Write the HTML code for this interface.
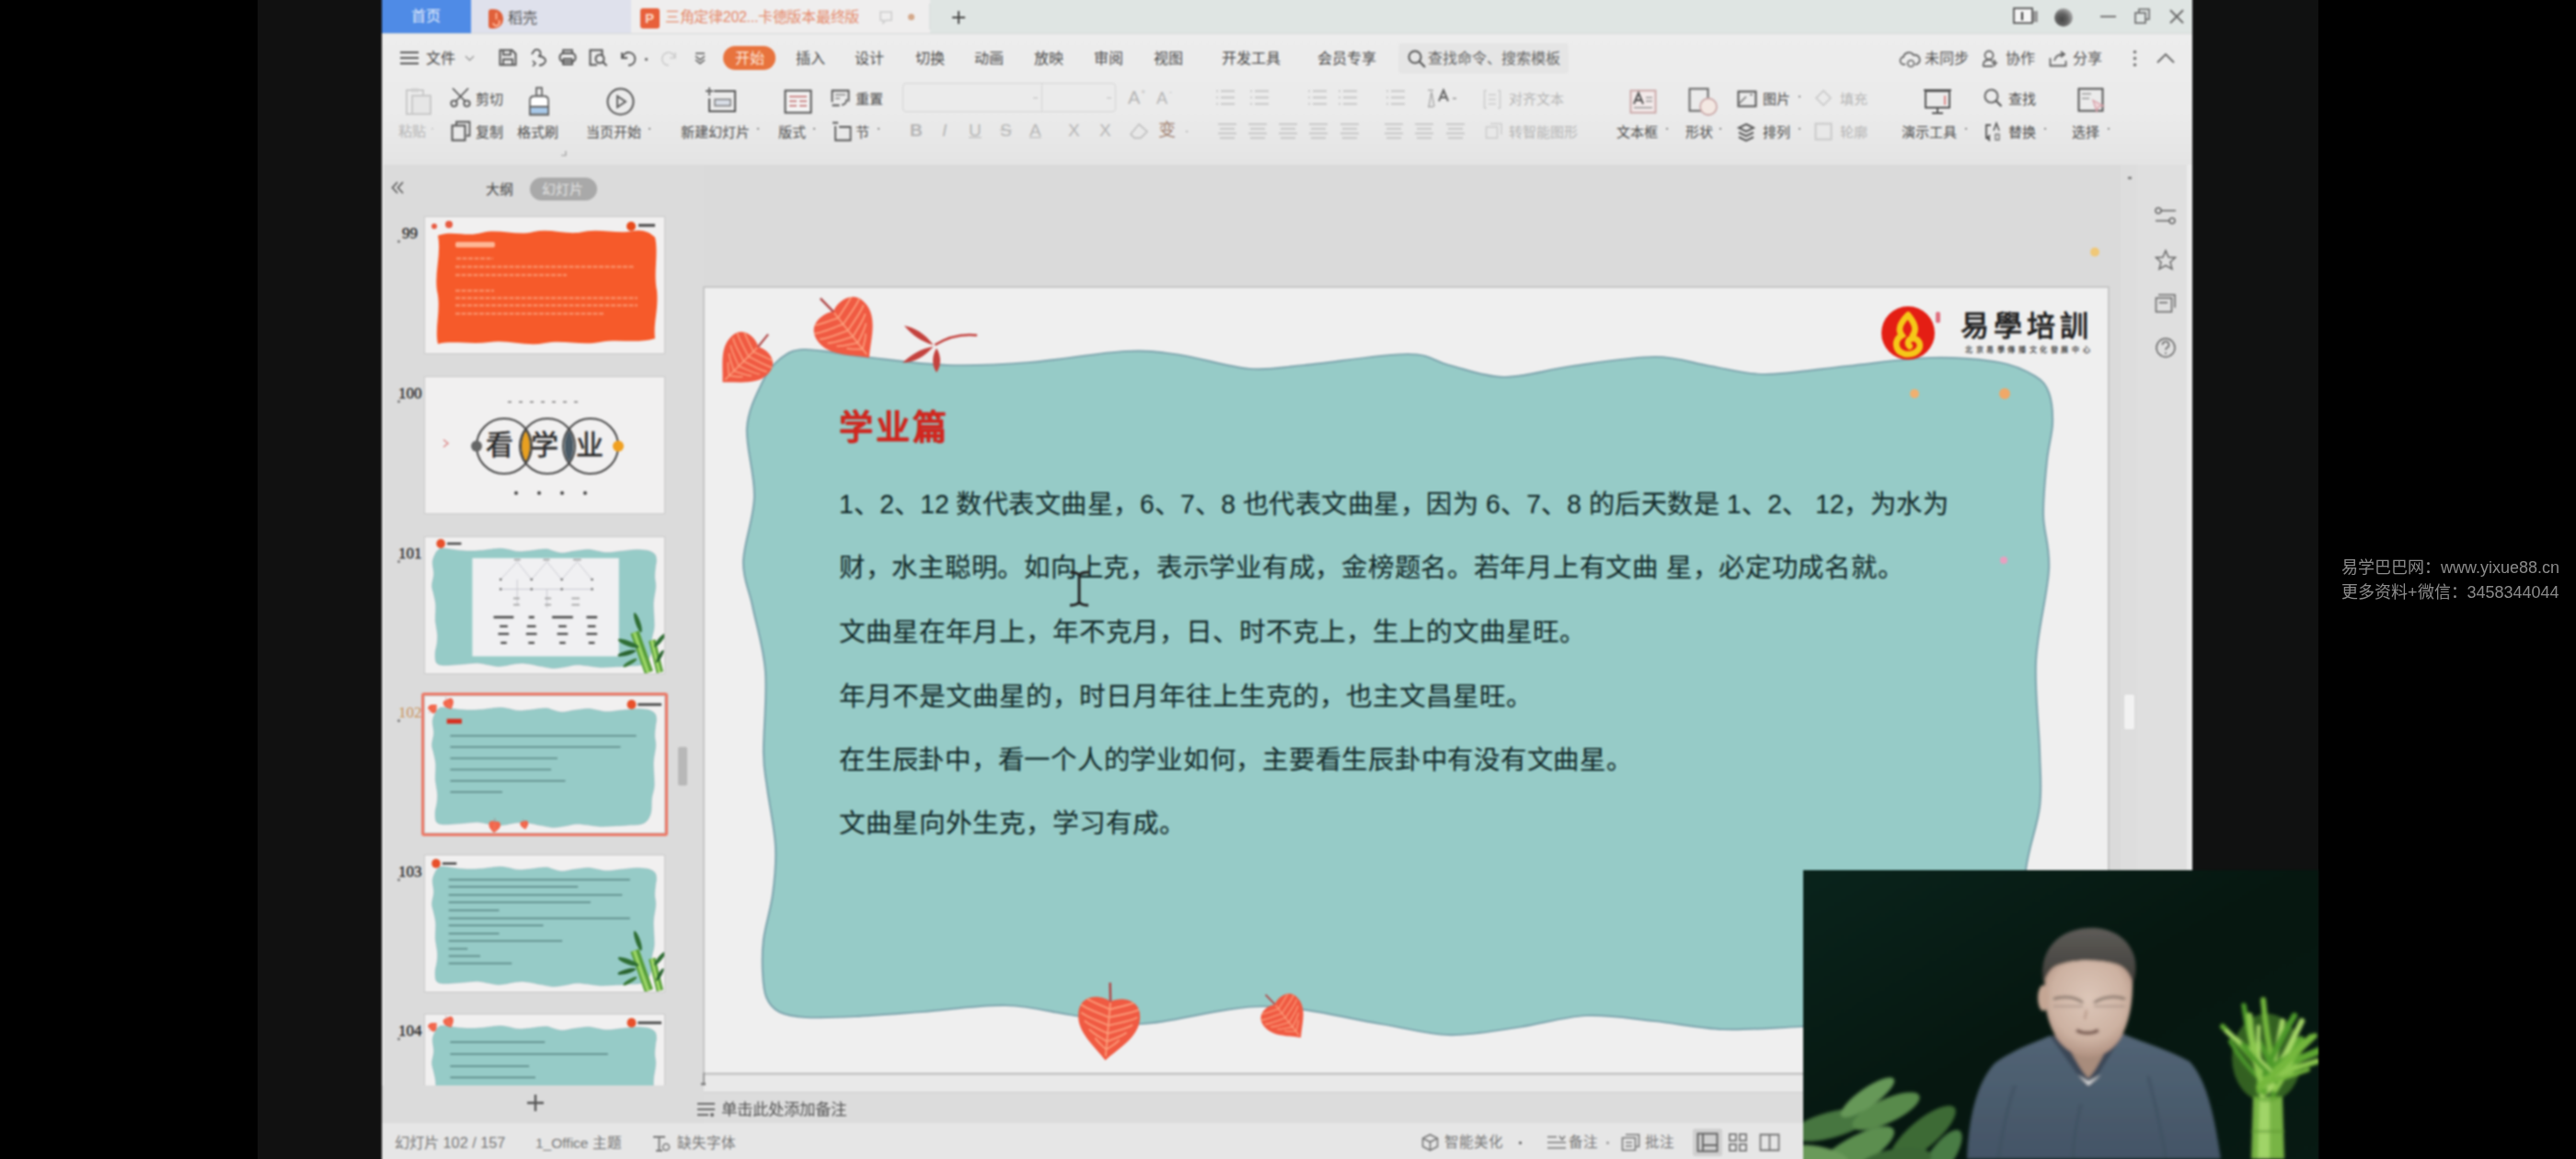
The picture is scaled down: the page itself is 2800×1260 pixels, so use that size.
<!DOCTYPE html>
<html lang="zh-CN"><head><meta charset="utf-8">
<style>
*{margin:0;padding:0;box-sizing:border-box}
html,body{width:2800px;height:1260px;overflow:hidden;background:#000;font-family:"Liberation Sans",sans-serif}
.a{position:absolute}
.t{position:absolute;white-space:nowrap;line-height:1}
.wm{left:2545px;color:#8a8a8a;font-size:18px}
.mi{top:56px;font-size:16px;color:#4a4a4a}
.rb{font-size:15px;color:#4a4a4a}
.lt{color:#b4b4b4}
.dd{font-size:10px;color:#777}
.sl{font-size:28.6px;color:#132a2a;-webkit-text-stroke:0.15px #132a2a;font-family:"Liberation Sans",sans-serif;transform-origin:0 0}
svg{position:absolute;overflow:visible}
</style></head><body>
<div class="a" style="left:280px;top:-6px;width:135px;height:1272px;background:#111"></div>
<div class="a" style="left:2383px;top:-6px;width:137px;height:1272px;background:#101111"></div>
<div id="root" style="position:absolute;left:0;top:0;width:2800px;height:1260px;filter:blur(1px)">
<!-- backgrounds -->

<!-- window -->
<div class="a" style="left:415px;top:-6px;width:1968px;height:43px;background:#dfe5e3"></div>
<div class="a" style="left:415px;top:-6px;width:97px;height:43px;background:#4f8be6"></div>
<div class="a" style="left:512px;top:-6px;width:174px;height:43px;background:#dfe1ec"></div>
<div class="a" style="left:686px;top:-6px;width:325px;height:43px;background:#efeeee"></div>
<div class="a" style="left:415px;top:36px;width:1968px;height:1px;background:#d6d9d9"></div>
<div class="a" style="left:415px;top:37px;width:1968px;height:142px;background:linear-gradient(#ededed,#ebebeb 60%,#e4e4e4)"></div>

<!-- tab bar content -->
<div class="t" style="left:447px;top:10px;font-size:16px;color:#e8f0fc">首页</div>
<div class="a" style="left:531px;top:10px;width:16px;height:21px;background:#e0603a;border-radius:3px 10px 10px 3px"></div>
<svg style="left:533px;top:13px" width="12" height="16"><path d="M7 1C5 4 8 5 6 8 M3 12a3.5 3.5 0 1 0 6-3" fill="none" stroke="#ffb090" stroke-width="2"/></svg>
<div class="t" style="left:552px;top:12px;font-size:16px;color:#555">稻壳</div>
<div class="a" style="left:696px;top:9px;width:21px;height:22px;background:#e8603a;border-radius:3px"></div>
<div class="t" style="left:701px;top:12px;font-size:15px;font-weight:bold;color:#fbd9c8">P</div>
<div class="t" style="left:723px;top:11px;font-size:16px;color:#e5896a;letter-spacing:-0.3px">三角定律202...卡德版本最终版</div>
<svg style="left:955px;top:11px" width="16" height="16"><path d="M2 2h12v9H8l-3 3v-3H2z" fill="none" stroke="#ccc" stroke-width="1.6"/></svg>
<div class="a" style="left:987px;top:15px;width:7px;height:7px;border-radius:50%;background:#d4a88a"></div>
<div class="a" style="left:1010px;top:4px;width:1px;height:28px;background:#d8dcdc"></div>
<svg style="left:1034px;top:11px" width="16" height="16"><path d="M8 1v14M1 8h14" stroke="#444" stroke-width="2"/></svg>
<!-- window controls -->
<svg style="left:2188px;top:8px" width="30" height="20"><rect x="1" y="1" width="20" height="16" fill="#f4f4f4" stroke="#555" stroke-width="1.8"/><rect x="22" y="4" width="5" height="12" fill="#999"/><path d="M10 5v9" stroke="#333" stroke-width="2"/></svg>
<div class="a" style="left:2233px;top:9px;width:20px;height:20px;border-radius:50%;background:radial-gradient(circle at 40% 60%,#444 0,#666 40%,#bbb 80%,transparent 81%)"></div>
<div class="a" style="left:2283px;top:17px;width:17px;height:2px;background:#777"></div>
<svg style="left:2320px;top:9px" width="18" height="18"><rect x="1" y="5" width="11" height="11" fill="none" stroke="#666" stroke-width="1.6"/><path d="M5 5V1h11v11h-4" fill="none" stroke="#666" stroke-width="1.6"/></svg>
<svg style="left:2358px;top:10px" width="16" height="16"><path d="M1 1l14 14M15 1L1 15" stroke="#666" stroke-width="1.8"/></svg>

<!-- menu row -->
<svg style="left:435px;top:55px" width="20" height="16"><path d="M0 2h20M0 8h20M0 14h20" stroke="#555" stroke-width="1.8"/></svg>
<div class="t mi" style="left:463px">文件</div>
<svg style="left:505px;top:60px" width="11" height="7"><path d="M1 1l4.5 4.5L10 1" fill="none" stroke="#999" stroke-width="1.4"/></svg>
<svg style="left:542px;top:53px" width="20" height="19"><path d="M1.5 1.5h13l4 4v12h-17z" fill="none" stroke="#555" stroke-width="2"/><path d="M5 1.5v5h8v-5M5 17.5v-6h10v6" fill="none" stroke="#555" stroke-width="1.8"/></svg>
<svg style="left:576px;top:53px" width="19" height="20"><path d="M4 3a4 4 0 1 1 6 5M4 3l-2 3M9 8c4 0 8 2 8 5s-4 5-7 5" fill="none" stroke="#555" stroke-width="1.8"/><path d="M3 13l3 3-3 3" fill="none" stroke="#555" stroke-width="1.6"/></svg>
<svg style="left:607px;top:53px" width="20" height="19"><rect x="1.5" y="5" width="17" height="9" rx="4" fill="none" stroke="#555" stroke-width="2"/><path d="M5 5V1.5h10V5M5 11v6h10v-6M5 11h10" fill="none" stroke="#555" stroke-width="1.8"/></svg>
<svg style="left:640px;top:53px" width="21" height="20"><path d="M9 17.5H1.5v-16h13v6" fill="none" stroke="#555" stroke-width="2"/><circle cx="12" cy="11" r="4.5" fill="none" stroke="#555" stroke-width="2"/><path d="M15 14l4.5 4.5" stroke="#555" stroke-width="2"/></svg>
<svg style="left:674px;top:55px" width="18" height="17"><path d="M2 2v6h6" fill="none" stroke="#555" stroke-width="1.8"/><path d="M2.5 7.5A7 7 0 1 1 9 16" fill="none" stroke="#555" stroke-width="1.8"/></svg>
<div class="a" style="left:701px;top:63px;width:3px;height:3px;background:#777"></div>
<svg style="left:718px;top:55px" width="18" height="17"><path d="M16 2v6h-6" fill="none" stroke="#ccc" stroke-width="1.6"/><path d="M15.5 7.5A7 7 0 1 0 9 16" fill="none" stroke="#ccc" stroke-width="1.6"/></svg>
<svg style="left:755px;top:57px" width="12" height="12"><path d="M1 1h10M1 4l5 4 5-4M1 8l5 4 5-4" fill="none" stroke="#555" stroke-width="1.6"/></svg>
<div class="a" style="left:786px;top:50px;width:57px;height:26px;border-radius:13px;background:#e8733d"></div>
<div class="t mi" style="left:799px;color:#fde8dc">开始</div>
<div class="t mi" style="left:865px">插入</div>
<div class="t mi" style="left:929px">设计</div>
<div class="t mi" style="left:995px">切换</div>
<div class="t mi" style="left:1059px">动画</div>
<div class="t mi" style="left:1124px">放映</div>
<div class="t mi" style="left:1189px">审阅</div>
<div class="t mi" style="left:1254px">视图</div>
<div class="t mi" style="left:1328px">开发工具</div>
<div class="t mi" style="left:1432px">会员专享</div>
<div class="a" style="left:1520px;top:47px;width:185px;height:33px;border-radius:4px;background:#e5e5e5"></div>
<svg style="left:1530px;top:54px" width="21" height="20"><circle cx="8" cy="8" r="6.5" fill="none" stroke="#555" stroke-width="2"/><path d="M13 13l6 6" stroke="#555" stroke-width="2.2"/></svg>
<div class="t mi" style="left:1552px;color:#666">查找命令、搜索模板</div>
<svg style="left:2065px;top:54px" width="23" height="20"><path d="M6 16H5a4 4 0 0 1-1-8 6 6 0 0 1 11-2 5 5 0 0 1 3 10h-1" fill="none" stroke="#666" stroke-width="1.8"/><circle cx="12" cy="15" r="3.5" fill="none" stroke="#666" stroke-width="1.6"/></svg>
<div class="t mi" style="left:2092px;color:#555">未同步</div>
<svg style="left:2154px;top:54px" width="20" height="19"><circle cx="8" cy="6" r="4.5" fill="none" stroke="#666" stroke-width="1.8"/><path d="M1.5 18c0-5 3-7 6.5-7 2 0 3 .5 4 1.5M1.5 18h11M14 11v7M11 14.5h6" fill="none" stroke="#666" stroke-width="1.8"/></svg>
<div class="t mi" style="left:2180px;color:#555">协作</div>
<svg style="left:2227px;top:54px" width="21" height="19"><path d="M1.5 9v8.5h17V12M6 12c1-5 5-7 10-7M13 2l4 3-4 3" fill="none" stroke="#666" stroke-width="1.8"/></svg>
<div class="t mi" style="left:2253px;color:#555">分享</div>
<svg style="left:2318px;top:54px" width="5" height="19"><circle cx="2.5" cy="2.5" r="1.8" fill="#777"/><circle cx="2.5" cy="9.5" r="1.8" fill="#777"/><circle cx="2.5" cy="16.5" r="1.8" fill="#777"/></svg>
<svg style="left:2344px;top:58px" width="20" height="11"><path d="M1 10l9-9 9 9" fill="none" stroke="#666" stroke-width="1.8"/></svg>

<!-- ribbon -->
<svg style="left:440px;top:95px" width="30" height="31"><path d="M2 3h18v26H2z" fill="none" stroke="#c8c8c8" stroke-width="2"/><path d="M8 9h20v20H8z" fill="#e6e6e6" stroke="#c8c8c8" stroke-width="2"/><path d="M7 1h8v4H7z" fill="#d0d0d0"/></svg>
<div class="t rb lt" style="left:433px;top:135px">粘贴</div><div class="a" style="left:469px;top:139px;width:2px;height:2px;background:#ccc"></div>
<svg style="left:489px;top:95px" width="23" height="22"><circle cx="4.5" cy="17.5" r="3.2" fill="none" stroke="#555" stroke-width="1.8"/><circle cx="18.5" cy="17.5" r="3.2" fill="none" stroke="#555" stroke-width="1.8"/><path d="M6.5 15L20 1M16.5 15L3 1" stroke="#555" stroke-width="1.8"/></svg>
<div class="t rb" style="left:517px;top:100px">剪切</div>
<svg style="left:490px;top:131px" width="22" height="23"><path d="M6 5V1.5h14.5v15H17" fill="none" stroke="#555" stroke-width="1.8"/><path d="M1.5 5.5h14v16h-14z" fill="none" stroke="#555" stroke-width="2"/></svg>
<div class="t rb" style="left:517px;top:136px">复制</div>
<svg style="left:573px;top:94px" width="26" height="32"><path d="M10 1.5h6v9h-6z" fill="none" stroke="#666" stroke-width="1.8"/><path d="M3 15c0-3 2-4.5 5-4.5h10c3 0 5 1.5 5 4.5v15.5H3z" fill="#fff" stroke="#666" stroke-width="1.8"/><path d="M3 22h20v8.5H3z" fill="#a8c8e8" stroke="#666" stroke-width="1.8"/></svg>
<div class="t rb" style="left:562px;top:136px">格式刷</div><svg style="left:610px;top:164px" width="6" height="6"><path d="M5 0v5H0" fill="none" stroke="#999" stroke-width="1.2"/></svg>
<svg style="left:659px;top:95px" width="31" height="31"><circle cx="15.5" cy="15.5" r="14" fill="none" stroke="#555" stroke-width="2"/><path d="M12 9.5v12l9-6z" fill="none" stroke="#555" stroke-width="1.8"/></svg>
<div class="t rb" style="left:637px;top:136px">当页开始</div><div class="a" style="left:705px;top:139px;width:2px;height:2px;background:#888"></div>
<svg style="left:768px;top:94px" width="33" height="29"><path d="M3 1v9M-1 5h8" stroke="#666" stroke-width="1.8"/><path d="M8 5h23v22H3V13" fill="none" stroke="#555" stroke-width="2"/><rect x="9" y="14" width="17" height="7" fill="#d8dde6" stroke="#777" stroke-width="1.4"/></svg>
<div class="t rb" style="left:740px;top:136px">新建幻灯片</div><div class="a" style="left:823px;top:139px;width:2px;height:2px;background:#888"></div>
<svg style="left:852px;top:97px" width="31" height="27"><rect x="1.5" y="1.5" width="28" height="24" fill="#f4f4f4" stroke="#555" stroke-width="2"/><path d="M6 8h19M6 13h8M17 13h8M6 18h8M17 18h8" stroke="#c88" stroke-width="2"/></svg>
<div class="t rb" style="left:846px;top:136px">版式</div><div class="a" style="left:884px;top:139px;width:2px;height:2px;background:#888"></div>
<svg style="left:903px;top:97px" width="22" height="20"><path d="M1.5 14V1.5h18v12" fill="none" stroke="#555" stroke-width="1.8"/><path d="M5 6h11M5 10h5" stroke="#888" stroke-width="1.6"/><path d="M1.5 17.5h8M17 11a5 5 0 0 1-5 6" fill="none" stroke="#555" stroke-width="1.8"/></svg>
<div class="t rb" style="left:930px;top:100px">重置</div>
<svg style="left:903px;top:132px" width="23" height="22"><path d="M2 1.5h6M5 5V20.5h16.5V6H9" fill="none" stroke="#555" stroke-width="1.8"/></svg>
<div class="t rb" style="left:930px;top:136px">节</div><div class="a" style="left:954px;top:139px;width:2px;height:2px;background:#888"></div>
<div class="a" style="left:981px;top:90px;width:232px;height:32px;border:1px solid #d4d4d4;border-radius:4px;background:#ebebeb"></div>
<div class="a" style="left:1132px;top:91px;width:1px;height:30px;background:#d4d4d4"></div>
<div class="a" style="left:1123px;top:106px;width:5px;height:1px;background:#bbb"></div>
<div class="a" style="left:1203px;top:106px;width:5px;height:1px;background:#bbb"></div>
<div class="t lt" style="left:1226px;top:96px;font-size:20px">A</div><div class="t lt" style="left:1240px;top:96px;font-size:9px">+</div>
<div class="t lt" style="left:1257px;top:98px;font-size:18px">A</div><div class="t lt" style="left:1271px;top:96px;font-size:9px">-</div>
<div class="t lt" style="left:989px;top:132px;font-size:19px;font-weight:bold">B</div>
<div class="t lt" style="left:1024px;top:132px;font-size:19px;font-style:italic">I</div>
<div class="t lt" style="left:1053px;top:132px;font-size:19px;text-decoration:underline">U</div>
<div class="t lt" style="left:1087px;top:132px;font-size:19px;text-decoration:line-through">S</div>
<div class="t lt" style="left:1119px;top:132px;font-size:19px;text-decoration:underline">A</div>
<div class="t lt" style="left:1161px;top:132px;font-size:19px">X</div>
<div class="t lt" style="left:1195px;top:132px;font-size:19px">X</div>
<svg style="left:1228px;top:134px" width="21" height="18"><path d="M10 1l9 8-7 7H5l-4-4z" fill="none" stroke="#c4c4c4" stroke-width="1.8"/></svg>
<div class="t" style="left:1259px;top:132px;font-size:19px;color:#a08070">变</div><div class="a" style="left:1289px;top:142px;width:2px;height:2px;background:#bbb"></div>
<svg style="left:1320px;top:97px" width="24" height="20"><path d="M2 2h2M2 9h2M2 16h2M7 2h15M7 9h15M7 16h15" stroke="#c8c8c8" stroke-width="1.8"/></svg>
<svg style="left:1357px;top:97px" width="24" height="20"><path d="M2 2h2M2 9h2M2 16h2M7 2h15M7 9h15M7 16h15" stroke="#c8c8c8" stroke-width="1.8"/></svg>
<svg style="left:1420px;top:97px" width="24" height="20"><path d="M2 2h2M2 9h2M2 16h2M7 2h15M7 9h15M7 16h15" stroke="#c8c8c8" stroke-width="1.8"/></svg>
<svg style="left:1453px;top:97px" width="24" height="20"><path d="M2 2h2M2 9h2M2 16h2M7 2h15M7 9h15M7 16h15" stroke="#c8c8c8" stroke-width="1.8"/></svg>
<svg style="left:1505px;top:97px" width="24" height="20"><path d="M2 2h2M2 9h2M2 16h2M7 2h15M7 9h15M7 16h15" stroke="#c8c8c8" stroke-width="1.8"/></svg>
<svg style="left:1322px;top:133px" width="24" height="20"><path d="M2 2h20M4 7h16M2 12h20M4 17h16" stroke="#c8c8c8" stroke-width="1.8"/></svg>
<svg style="left:1355px;top:133px" width="24" height="20"><path d="M2 2h20M4 7h16M2 12h20M4 17h16" stroke="#c8c8c8" stroke-width="1.8"/></svg>
<svg style="left:1388px;top:133px" width="24" height="20"><path d="M2 2h20M4 7h16M2 12h20M4 17h16" stroke="#c8c8c8" stroke-width="1.8"/></svg>
<svg style="left:1421px;top:133px" width="24" height="20"><path d="M2 2h20M4 7h16M2 12h20M4 17h16" stroke="#c8c8c8" stroke-width="1.8"/></svg>
<svg style="left:1455px;top:133px" width="24" height="20"><path d="M2 2h20M4 7h16M2 12h20M4 17h16" stroke="#c8c8c8" stroke-width="1.8"/></svg>
<svg style="left:1503px;top:133px" width="24" height="20"><path d="M2 2h20M4 7h16M2 12h20M4 17h16" stroke="#c8c8c8" stroke-width="1.8"/></svg>
<svg style="left:1536px;top:133px" width="24" height="20"><path d="M2 2h20M4 7h16M2 12h20M4 17h16" stroke="#c8c8c8" stroke-width="1.8"/></svg>
<svg style="left:1570px;top:133px" width="24" height="20"><path d="M2 2h20M4 7h16M2 12h20M4 17h16" stroke="#c8c8c8" stroke-width="1.8"/></svg>

<svg style="left:1550px;top:96px" width="28" height="22"><path d="M3 20l3-16M6 4l3 16M2 2h6M2 20h6" stroke="#aaa" stroke-width="1.4"/><path d="M14 14l5-12 5 12M16 10h6" fill="none" stroke="#666" stroke-width="2"/></svg>
<div class="a" style="left:1579px;top:106px;width:4px;height:2px;background:#aaa"></div>
<svg style="left:1612px;top:97px" width="20" height="22"><path d="M4 1.5H1.5v19H4M16 1.5h2.5v19H16M6 6h8M6 11h8M6 16h8" fill="none" stroke="#ccc" stroke-width="1.6"/></svg>
<div class="t lt" style="left:1640px;top:100px;font-size:15px">对齐文本</div>
<svg style="left:1614px;top:133px" width="20" height="22"><path d="M1.5 5h12v12h-12z" fill="none" stroke="#ccc" stroke-width="1.6"/><path d="M6 1.5h12v12" fill="none" stroke="#ccc" stroke-width="1.6"/></svg>
<div class="t lt" style="left:1640px;top:136px;font-size:15px">转智能图形</div>
<!-- insert group -->
<svg style="left:1771px;top:97px" width="30" height="28"><rect x="1.5" y="1.5" width="27" height="24" fill="#f3eaea" stroke="#caa" stroke-width="2"/><path d="M5 16l5-12 5 12M7 12h6" fill="none" stroke="#555" stroke-width="2"/><path d="M18 9h7M18 13h7M5 20h20" stroke="#999" stroke-width="1.5"/></svg>
<div class="t rb" style="left:1757px;top:136px">文本框</div><div class="a" style="left:1811px;top:139px;width:2px;height:2px;background:#888"></div>
<svg style="left:1835px;top:95px" width="34" height="32"><rect x="1.5" y="1.5" width="20" height="24" fill="none" stroke="#666" stroke-width="2"/><circle cx="22" cy="21" r="9" fill="#f3e8e2" stroke="#caa" stroke-width="1.8"/></svg>
<div class="t rb" style="left:1832px;top:136px">形状</div><div class="a" style="left:1869px;top:139px;width:2px;height:2px;background:#888"></div>
<svg style="left:1888px;top:98px" width="22" height="19"><rect x="1.5" y="1.5" width="19" height="16" fill="none" stroke="#555" stroke-width="2"/><path d="M2 15l8-8M14 5h3" stroke="#777" stroke-width="1.6"/></svg>
<div class="t rb" style="left:1916px;top:100px">图片</div><div class="a" style="left:1955px;top:104px;width:2px;height:2px;background:#888"></div>
<svg style="left:1972px;top:97px" width="20" height="20"><path d="M10 1.5l8 8-8 8-8-8z" fill="none" stroke="#ccc" stroke-width="1.8"/></svg>
<div class="t lt" style="left:2000px;top:100px;font-size:15px">填充</div>
<svg style="left:1888px;top:133px" width="20" height="22"><path d="M10 2l8 4-8 4-8-4z M2 11l8 4 8-4M2 16l8 4 8-4" fill="none" stroke="#555" stroke-width="2"/></svg>
<div class="t rb" style="left:1916px;top:136px">排列</div><div class="a" style="left:1955px;top:139px;width:2px;height:2px;background:#888"></div>
<svg style="left:1972px;top:133px" width="20" height="20"><rect x="1.5" y="1.5" width="17" height="17" fill="none" stroke="#ccc" stroke-width="2.2"/></svg>
<div class="t lt" style="left:2000px;top:136px;font-size:15px">轮廓</div>
<svg style="left:2090px;top:96px" width="32" height="29"><path d="M1 2h30" stroke="#555" stroke-width="2"/><rect x="3" y="3" width="26" height="18" fill="none" stroke="#555" stroke-width="2"/><path d="M16 21v6M10 27h12" stroke="#555" stroke-width="2"/><path d="M24 8v10" stroke="#d88" stroke-width="2"/></svg>
<div class="t rb" style="left:2067px;top:136px">演示工具</div><div class="a" style="left:2136px;top:139px;width:2px;height:2px;background:#888"></div>
<svg style="left:2156px;top:96px" width="21" height="22"><circle cx="8.5" cy="8.5" r="7" fill="none" stroke="#666" stroke-width="2"/><path d="M13.5 13.5l6 6" stroke="#555" stroke-width="2.2"/></svg>
<div class="t rb" style="left:2183px;top:100px">查找</div>
<svg style="left:2156px;top:132px" width="22" height="22"><path d="M8 4H3v14h4M7 15l-3 3 3 3" fill="none" stroke="#555" stroke-width="1.8"/><path d="M11 10l3-8 3 8" fill="none" stroke="#555" stroke-width="1.6"/><path d="M13 14h4v6h-4z" fill="none" stroke="#777" stroke-width="1.4"/></svg>
<div class="t rb" style="left:2183px;top:136px">替换</div><div class="a" style="left:2222px;top:139px;width:2px;height:2px;background:#888"></div>
<svg style="left:2258px;top:95px" width="30" height="30"><rect x="1.5" y="1.5" width="26" height="24" fill="none" stroke="#555" stroke-width="2"/><path d="M5 7h10M5 12h8" stroke="#999" stroke-width="1.6"/><path d="M17 14l11 6-5 1-2 5z" fill="#f0d8dc" stroke="#d8a0a8" stroke-width="1.4"/></svg>
<div class="t rb" style="left:2252px;top:136px">选择</div><div class="a" style="left:2291px;top:139px;width:2px;height:2px;background:#888"></div>

<!-- panel + edit backgrounds -->
<div class="a" style="left:415px;top:179px;width:350px;height:1042px;background:#dbdbdb"></div>
<div class="a" style="left:415px;top:37px;width:2px;height:1230px;background:#ececec"></div>
<div class="a" style="left:765px;top:179px;width:1558px;height:1042px;background:#dadada"></div>
<div class="a" style="left:2305px;top:179px;width:18px;height:1009px;background:#dddddd"></div>
<div class="a" style="left:2323px;top:179px;width:54px;height:1042px;background:#dfdfdf"></div>
<div class="a" style="left:2377px;top:179px;width:6px;height:1081px;background:#ebebeb"></div>
<div class="a" style="left:415px;top:1221px;width:1968px;height:45px;background:#e6e6e6"></div>
<div class="a" style="left:765px;top:1168px;width:1541px;height:19px;background:#e9e9e9;border-top:1px solid #cfcfcf"></div>
<div class="a" style="left:750px;top:1187px;width:1573px;height:34px;background:#dcdcdc;border-top:1px solid #cfcfcf"></div>

<!-- slide -->
<svg style="left:764px;top:311px" width="1529" height="857" viewBox="0 0 1529 857">
<defs>
<clipPath id="lclip"><path d="M0,-32 C-12,-40 -46,-42 -46,-10 C-46,18 -18,36 0,56 C18,36 46,18 46,-10 C46,-42 12,-40 0,-32Z"/></clipPath>
<g id="leaf">
<path d="M0,-32 C-12,-40 -46,-42 -46,-10 C-46,18 -18,36 0,56 C18,36 46,18 46,-10 C46,-42 12,-40 0,-32Z" fill="#f05a42"/>
<path d="M0,-30V50 M0,-20 C-16,-26 -32,-30 -40,-36 M0,-20 C16,-26 32,-30 40,-36 M0,-8 C-18,-14 -35,-18 -44,-24 M0,-8 C18,-14 35,-18 44,-24 M0,4 C-17,-2 -34,-6 -42,-12 M0,4 C17,-2 34,-6 42,-12 M0,16 C-14,10 -29,6 -36,0 M0,16 C14,10 29,6 36,0 M0,28 C-11,22 -22,18 -28,12 M0,28 C11,22 22,18 28,12 M0,40 C-7,34 -14,30 -18,24 M0,40 C7,34 14,30 18,24 " stroke="#fb9a78" stroke-width="2.6" fill="none" clip-path="url(#lclip)"/>
<path d="M0,-32L-3,-60" stroke="#b04848" stroke-width="3.5"/>
</g>
</defs>
<rect x="1" y="1" width="1527" height="855" fill="#efefef" stroke="#c6c6c6" stroke-width="2"/>
<path id="blobp" d="M48,154C46.5,174.8 56.7,204.7 56,229C55.3,253.3 44.3,280.2 44,300C43.7,319.8 50.0,328.2 54,348C58.0,367.8 66.0,392.5 68,419C70.0,445.5 65.7,485.8 66,507C66.3,528.2 67.8,529.0 70,546C72.2,563.0 78.0,589.8 79,609C80.0,628.2 78.2,644.2 76,661C73.8,677.8 67.8,695.8 66,710C64.2,724.2 64.5,735.5 65,746C65.5,756.5 66.0,765.8 69,773C72.0,780.2 75.8,785.3 83,789C90.2,792.7 98.3,794.2 112,795C125.7,795.8 144.0,795.0 165,794C186.0,793.0 210.5,791.0 238,789C265.5,787.0 302.3,781.3 330,782C357.7,782.7 379.3,789.7 404,793C428.7,796.3 443.7,803.7 478,802C512.3,800.3 567.0,783.0 610,783C653.0,783.0 702.7,796.8 736,802C769.3,807.2 785.2,813.3 810,814C834.8,814.7 860.0,809.5 885,806C910.0,802.5 935.2,794.2 960,793C984.8,791.8 1009.2,796.5 1034,799C1058.8,801.5 1082.5,807.0 1109,808C1135.5,809.0 1165.2,806.2 1193,805C1220.8,803.8 1243.8,803.7 1276,801C1308.2,798.3 1360.2,801.0 1386,789C1411.8,777.0 1422.3,754.8 1431,729C1439.7,703.2 1434.3,661.2 1438,634C1441.7,606.8 1450.5,587.3 1453,566C1455.5,544.7 1453.7,532.5 1453,506C1452.3,479.5 1447.3,440.0 1449,407C1450.7,374.0 1461.7,334.3 1463,308C1464.3,281.7 1457.3,268.8 1457,249C1456.7,229.2 1459.3,205.7 1461,189C1462.7,172.3 1466.7,161.2 1467,149C1467.3,136.8 1466.2,124.5 1463,116C1459.8,107.5 1457.0,103.5 1448,98C1439.0,92.5 1428.0,86.3 1409,83C1390.0,79.7 1361.5,77.3 1334,78C1306.5,78.7 1273.8,84.0 1244,87C1214.2,90.0 1179.8,96.0 1155,96C1130.2,96.0 1115.0,90.2 1095,87C1075.0,83.8 1060.0,77.0 1035,77C1010.0,77.0 972.3,83.3 945,87C917.7,90.7 893.3,99.2 871,99C848.7,98.8 828.5,90.2 811,86C793.5,81.8 792.2,74.0 766,74C739.8,74.0 682.7,83.3 654,86C625.3,88.7 616.5,91.8 594,90C571.5,88.2 541.5,78.2 519,75C496.5,71.8 486.3,69.7 459,71C431.7,72.3 387.3,80.5 355,83C322.7,85.5 295.0,87.0 265,86C235.0,85.0 200.8,79.8 175,77C149.2,74.2 125.3,68.5 110,69C94.7,69.5 90.5,74.2 83,80C75.5,85.8 70.8,91.7 65,104C59.2,116.3 49.5,133.2 48,154Z" fill="#96cbc7" stroke="#80a8b0" stroke-width="2.2"/>
<use href="#leaf" transform="translate(46,80) rotate(45) scale(0.62)"/>
<use href="#leaf" transform="translate(156,46) rotate(-38) scale(0.72)"/>
<g transform="translate(254,64) scale(0.88)" fill="#c4423e">
<path d="M-2,0 C14,-10 32,-14 50,-12" fill="none" stroke="#c4423e" stroke-width="3"/>
<path d="M-4,0 C-14,-14 -28,-22 -40,-24 C-30,-12 -18,-4 -4,0Z"/>
<path d="M-4,2 C-18,4 -32,12 -42,22 C-28,22 -14,14 -4,2Z"/>
<path d="M0,4 C-6,14 -6,26 0,34 C6,26 6,14 0,4Z"/>
</g>
<use href="#leaf" transform="translate(441,801) rotate(5) scale(0.73)"/>
<use href="#leaf" transform="translate(632,794) rotate(-38) scale(0.52)"/>
<circle cx="1310" cy="51" r="29" fill="#e41e14"/>
<g transform="translate(1310,51) scale(0.85) translate(-1310,-51)"><path d="M1310,28 C1300,38 1296,46 1302,54 C1292,60 1292,74 1306,78 C1322,80 1330,68 1322,60 C1314,54 1306,62 1312,68 M1310,28 C1318,38 1322,46 1316,54" fill="none" stroke="#f5c818" stroke-width="8" stroke-linecap="round"/></g>
<rect x="1340" y="28" width="5" height="12" rx="2" fill="#e07080"/>
<circle cx="1317" cy="117" r="5" fill="#f0b070"/>
<circle cx="1415" cy="117" r="6" fill="#f0a868"/>
<circle cx="1414" cy="298" r="4" fill="#e8a0c0"/>
</svg>
<div class="a" style="left:2272px;top:269px;width:10px;height:10px;border-radius:50%;background:#f0c878"></div>
<div class="t" style="left:2131px;top:339px;font-size:31px;font-weight:bold;color:#222;letter-spacing:5px;font-family:'Liberation Serif',serif">易學培訓</div>
<div class="t" style="left:2136px;top:377px;font-size:8px;color:#555;font-weight:bold;letter-spacing:3.6px">北京易學傳播文化發展中心</div>
<div class="t" style="left:912px;top:447px;font-size:37px;font-weight:bold;color:#d3261e;letter-spacing:3px;text-shadow:0 0 1px #a01010">学业篇</div>
<div class="t sl" id="L0" style="left:912px;top:534px;transform:scaleX(0.983)">1、2、12 数代表文曲星，6、7、8 也代表文曲星，因为 6、7、8 的后天数是 1、2、 12，为水为</div>
<div class="t sl" id="L1" style="left:912px;top:603px;transform:scaleX(0.991)">财，水主聪明。如向上克，表示学业有成，金榜题名。若年月上有文曲 星，必定功成名就。</div>
<div class="t sl" id="L2" style="left:912px;top:673px;transform:scaleX(1)">文曲星在年月上，年不克月，日、时不克上，生上的文曲星旺。</div>
<div class="t sl" id="L3" style="left:912px;top:743px;transform:scaleX(1)">年月不是文曲星的，时日月年往上生克的，也主文昌星旺。</div>
<div class="t sl" id="L4" style="left:912px;top:812px;transform:scaleX(0.9915)">在生辰卦中，看一个人的学业如何，主要看生辰卦中有没有文曲星。</div>
<div class="t sl" id="L5" style="left:912px;top:881px;transform:scaleX(1)">文曲星向外生克，学习有成。</div>

<!-- panel content -->
<svg style="left:425px;top:197px" width="14" height="14"><path d="M7 1L1.5 7 7 13M13 1L7.5 7 13 13" fill="none" stroke="#555" stroke-width="1.6"/></svg>
<div class="t" style="left:528px;top:198px;font-size:15px;color:#444">大纲</div>
<div class="a" style="left:576px;top:193px;width:73px;height:25px;border-radius:12.5px;background:#a9a9a9"></div>
<div class="t" style="left:589px;top:198px;font-size:15px;color:#e4e4e4">幻灯片</div>
<div class="t" style="left:437px;top:245px;font-size:17px;color:#222;font-family:'Liberation Serif',serif;-webkit-text-stroke:0.3px #222">99</div>
<div class="a" style="left:432px;top:261px;width:3px;height:3px;border-radius:50%;background:#777"></div>
<div class="t" style="left:433px;top:419px;font-size:17px;color:#222;font-family:'Liberation Serif',serif;-webkit-text-stroke:0.3px #222">100</div>
<div class="a" style="left:432px;top:435px;width:3px;height:3px;border-radius:50%;background:#777"></div>
<div class="t" style="left:433px;top:593px;font-size:17px;color:#222;font-family:'Liberation Serif',serif;-webkit-text-stroke:0.3px #222">101</div>
<div class="a" style="left:432px;top:609px;width:3px;height:3px;border-radius:50%;background:#777"></div>
<div class="t" style="left:433px;top:766px;font-size:17px;color:#c9925a;font-family:'Liberation Serif',serif">102</div>
<div class="a" style="left:432px;top:782px;width:3px;height:3px;border-radius:50%;background:#777"></div>
<div class="t" style="left:433px;top:939px;font-size:17px;color:#222;font-family:'Liberation Serif',serif;-webkit-text-stroke:0.3px #222">103</div>
<div class="a" style="left:432px;top:955px;width:3px;height:3px;border-radius:50%;background:#777"></div>
<div class="t" style="left:433px;top:1112px;font-size:17px;color:#222;font-family:'Liberation Serif',serif;-webkit-text-stroke:0.3px #222">104</div>
<div class="a" style="left:432px;top:1128px;width:3px;height:3px;border-radius:50%;background:#777"></div>
<div class="a" style="left:461px;top:235px;width:262px;height:150px;overflow:hidden;border:1.5px solid #c9c9c9;background:#f1f0f0"><svg style="left:0;top:0" width="262" height="150" viewBox="0 0 262 150">
<path d="M14,20 C30,14 45,22 62,17 C80,12 100,21 118,16 C136,12 155,20 172,16 C190,12 210,19 226,15 C236,13 244,16 250,22 C254,40 248,60 252,80 C254,100 248,115 250,132 C230,138 210,132 190,136 C170,140 150,133 130,137 C110,141 90,133 70,136 C50,139 30,134 14,138 C10,120 18,100 13,80 C10,60 18,40 14,20Z" fill="#f65a2a"/>
<rect x="33" y="27" width="43" height="6" rx="2" fill="#ffc0a0" opacity=".9"/>
<path d="M34,45h40M33,54h195M33,63h121M33,80h42M33,88h198M33,96h198M33,105h161" stroke="#fca07a" stroke-width="2.4" stroke-dasharray="5 1.5" opacity=".75"/>
<circle cx="10" cy="10" r="3" fill="#e85a40"/><circle cx="26" cy="8" r="4" fill="#e85a40"/>
<circle cx="224" cy="10" r="5" fill="#e84a1a"/><path d="M232,9h18" stroke="#444" stroke-width="3"/>
</svg></div>
<div class="a" style="left:461px;top:409px;width:262px;height:150px;overflow:hidden;border:1.5px solid #c9c9c9;background:#f1f0f0"><svg style="left:0;top:0" width="262" height="150" viewBox="0 0 262 150">
<path d="M90,27h80" stroke="#999" stroke-width="2" stroke-dasharray="4 8"/>
<circle cx="86" cy="75" r="30" fill="none" stroke="#444" stroke-width="2"/>
<circle cx="133" cy="75" r="30" fill="none" stroke="#444" stroke-width="2"/>
<circle cx="180" cy="75" r="30" fill="none" stroke="#444" stroke-width="2"/>
<path d="M109.5,58 C103,67 103,83 109.5,92 C116,83 116,67 109.5,58Z" fill="#e8a020" stroke="#444" stroke-width="1"/>
<path d="M156.5,58 C150,67 150,83 156.5,92 C163,83 163,67 156.5,58Z" fill="#4a5a66"/>
<circle cx="56" cy="75" r="6" fill="#666"/><circle cx="210" cy="75" r="6" fill="#f0a020"/>
<circle cx="99" cy="126" r="2" fill="#444"/><circle cx="124" cy="126" r="2" fill="#444"/><circle cx="149" cy="126" r="2" fill="#444"/><circle cx="174" cy="126" r="2" fill="#444"/>
<path d="M20,68l5,4-5,4" stroke="#d88" fill="none" stroke-width="1.5"/>
</svg>
<div class="t" style="left:66px;top:59px;font-size:30px;color:#2a2a2a;letter-spacing:19px;-webkit-text-stroke:0.6px #2a2a2a">看学业</div></div>
<div class="a" style="left:461px;top:583px;width:262px;height:150px;overflow:hidden;border:1.5px solid #c9c9c9;background:#f1f0f0"><svg style="left:0;top:0" width="262" height="150" viewBox="0 0 1529 857" preserveAspectRatio="none"><use href="#blobp" fill="#96cbc7" stroke="none"/><rect x="300" y="130" width="930" height="610" fill="#f0f0f2"/>
<path d="M479,263 L585,152 L675,263 L773,152 L867,263 L965,152 L1059,263 M479,323H1059 M585,263V420 M773,323V440" stroke="#c4c4cc" stroke-width="5" fill="none"/>
<path d="M479,263h1M675,263h1M867,263h1M1059,263h1M479,323h1M675,323h1M867,323h1M1059,323h1" stroke="#666" stroke-width="14" stroke-linecap="round"/>
<path d="M565,140h40M750,140h40M940,140h50M560,380h40M760,380h40M930,380h50M560,420h40M760,420h40M930,420h50" stroke="#999" stroke-width="9"/>
<path d="M435,497h127M658,497h35M806,497h132M1024,497h68M474,553h50M647,553h56M847,553h50M1032,553h50M464,600h68M641,600h68M838,600h68M1024,600h68M480,656h38M656,656h38M853,656h38M1038,656h38" stroke="#444" stroke-width="13"/>
<circle cx="100" cy="40" r="28" fill="#e8502a"/><path d="M140,40h90" stroke="#444" stroke-width="14"/><g><path d="M1420,840 L1330,590" stroke="#5aa03a" stroke-width="56"/><path d="M1415,840 L1327,592" stroke="#9ad466" stroke-width="22"/><path d="M1490,840 L1440,640" stroke="#5aa03a" stroke-width="44"/><path d="M1487,840 L1438,642" stroke="#a8dc70" stroke-width="16"/><path d="M1350,600 L1398,742" stroke="#3e8a34" stroke-width="4"/>
<ellipse cx="1290" cy="660" rx="70" ry="16" transform="rotate(20 1290 660)" fill="#2f6e34"/><ellipse cx="1280" cy="720" rx="60" ry="14" transform="rotate(-15 1280 720)" fill="#2a6430"/><ellipse cx="1350" cy="530" rx="65" ry="15" transform="rotate(70 1350 530)" fill="#2f6e34"/><ellipse cx="1490" cy="640" rx="55" ry="13" transform="rotate(-50 1490 640)" fill="#2f6e34"/><ellipse cx="1300" cy="780" rx="50" ry="12" transform="rotate(-30 1300 780)" fill="#3a7a3a"/><ellipse cx="1490" cy="740" rx="45" ry="11" transform="rotate(-60 1490 740)" fill="#2a6430"/></g></svg></div>
<div class="a" style="left:458px;top:753px;width:268px;height:156px;border:3px solid #ec7866;border-radius:3px"></div>
<div class="a" style="left:461px;top:756px;width:262px;height:150px;overflow:hidden;border:1.5px solid #c9c9c9;background:#f1f0f0"><svg style="left:0;top:0" width="262" height="150" viewBox="0 0 1529 857" preserveAspectRatio="none"><use href="#blobp" fill="#96cbc7" stroke="none"/><rect x="138" y="140" width="95" height="30" fill="#d83020"/><path d="M160,245h1180" stroke="#3a6060" stroke-width="9" opacity=".55"/><path d="M160,315h1080" stroke="#3a6060" stroke-width="9" opacity=".55"/><path d="M160,385h680" stroke="#3a6060" stroke-width="9" opacity=".55"/><path d="M160,455h640" stroke="#3a6060" stroke-width="9" opacity=".55"/><path d="M160,525h730" stroke="#3a6060" stroke-width="9" opacity=".55"/><path d="M160,595h330" stroke="#3a6060" stroke-width="9" opacity=".55"/><use href="#leaf" transform="translate(49,76) rotate(-135) scale(0.62)"/><use href="#leaf" transform="translate(150,44) rotate(-25) scale(0.72)"/><use href="#leaf" transform="translate(441,805) rotate(5) scale(0.8)"/><use href="#leaf" transform="translate(630,796) rotate(-12) scale(0.56)"/><circle cx="1310" cy="51" r="29" fill="#e8502a"/><path d="M1350,51h150" stroke="#444" stroke-width="16"/></svg></div>
<div class="a" style="left:461px;top:929px;width:262px;height:150px;overflow:hidden;border:1.5px solid #c9c9c9;background:#f1f0f0"><svg style="left:0;top:0" width="262" height="150" viewBox="0 0 1529 857" preserveAspectRatio="none"><use href="#blobp" fill="#96cbc7" stroke="none"/><path d="M150,150h1150" stroke="#2a5050" stroke-width="10" opacity=".5"/><path d="M150,195h820" stroke="#2a5050" stroke-width="10" opacity=".5"/><path d="M150,245h1100" stroke="#2a5050" stroke-width="10" opacity=".5"/><path d="M150,290h900" stroke="#2a5050" stroke-width="10" opacity=".5"/><path d="M150,340h320" stroke="#2a5050" stroke-width="10" opacity=".5"/><path d="M150,390h1150" stroke="#2a5050" stroke-width="10" opacity=".5"/><path d="M150,435h600" stroke="#2a5050" stroke-width="10" opacity=".5"/><path d="M150,485h320" stroke="#2a5050" stroke-width="10" opacity=".5"/><path d="M150,530h720" stroke="#2a5050" stroke-width="10" opacity=".5"/><path d="M150,580h120" stroke="#2a5050" stroke-width="10" opacity=".5"/><path d="M150,625h200" stroke="#2a5050" stroke-width="10" opacity=".5"/><path d="M150,670h400" stroke="#2a5050" stroke-width="10" opacity=".5"/><circle cx="70" cy="50" r="28" fill="#e8502a"/><path d="M110,50h90" stroke="#444" stroke-width="14"/><g><path d="M1420,840 L1330,590" stroke="#5aa03a" stroke-width="56"/><path d="M1415,840 L1327,592" stroke="#9ad466" stroke-width="22"/><path d="M1490,840 L1440,640" stroke="#5aa03a" stroke-width="44"/><path d="M1487,840 L1438,642" stroke="#a8dc70" stroke-width="16"/><path d="M1350,600 L1398,742" stroke="#3e8a34" stroke-width="4"/>
<ellipse cx="1290" cy="660" rx="70" ry="16" transform="rotate(20 1290 660)" fill="#2f6e34"/><ellipse cx="1280" cy="720" rx="60" ry="14" transform="rotate(-15 1280 720)" fill="#2a6430"/><ellipse cx="1350" cy="530" rx="65" ry="15" transform="rotate(70 1350 530)" fill="#2f6e34"/><ellipse cx="1490" cy="640" rx="55" ry="13" transform="rotate(-50 1490 640)" fill="#2f6e34"/><ellipse cx="1300" cy="780" rx="50" ry="12" transform="rotate(-30 1300 780)" fill="#3a7a3a"/><ellipse cx="1490" cy="740" rx="45" ry="11" transform="rotate(-60 1490 740)" fill="#2a6430"/></g></svg></div>
<div class="a" style="left:461px;top:1102px;width:262px;height:78px;overflow:hidden;border:1.5px solid #c9c9c9;border-bottom:none;background:#f1f0f0"><svg style="left:0;top:0" width="262" height="150" viewBox="0 0 1529 857" preserveAspectRatio="none"><use href="#blobp" fill="#96cbc7" stroke="none"/><path d="M160,170h600" stroke="#2a5050" stroke-width="10" opacity=".5"/><path d="M160,245h1000" stroke="#2a5050" stroke-width="10" opacity=".5"/><path d="M160,320h500" stroke="#2a5050" stroke-width="10" opacity=".5"/><path d="M160,390h540" stroke="#2a5050" stroke-width="10" opacity=".5"/><path d="M160,460h720" stroke="#2a5050" stroke-width="10" opacity=".5"/><path d="M160,530h1100" stroke="#2a5050" stroke-width="10" opacity=".5"/><use href="#leaf" transform="translate(49,76) rotate(-135) scale(0.62)"/><use href="#leaf" transform="translate(150,44) rotate(-25) scale(0.72)"/><circle cx="1310" cy="51" r="29" fill="#e8502a"/><path d="M1350,51h150" stroke="#444" stroke-width="16"/></svg></div>
<div class="a" style="left:415px;top:1180px;width:350px;height:41px;background:#dbdbdb"></div>
<svg style="left:572px;top:1189px" width="20" height="20"><path d="M10 1v18M1 10h18" stroke="#555" stroke-width="2.4"/></svg>
<div class="a" style="left:737px;top:812px;width:10px;height:42px;border-radius:2px;background:#b8b8b8"></div>

<!-- notes & status -->
<svg style="left:757px;top:1198px" width="21" height="17"><path d="M1 2h19M1 8h19M1 14h12" stroke="#666" stroke-width="1.8"/><circle cx="17" cy="14" r="2" fill="#666"/></svg>
<div class="t" style="left:784px;top:1198px;font-size:17.5px;color:#555">单击此处添加备注</div>
<div class="a" style="left:764px;top:1166px;width:1.5px;height:14px;background:#999"></div><div class="a" style="left:762px;top:1177px;width:5px;height:3px;background:#888"></div>
<div class="t" style="left:429px;top:1234px;font-size:16.3px;color:#777">幻灯片 102 / 157</div>
<div class="t" style="left:582px;top:1235px;font-size:15.5px;color:#777">1_Office 主题</div>
<svg style="left:709px;top:1234px" width="20" height="18"><path d="M1 2h13M7.5 2v15M4 17h7" stroke="#777" stroke-width="1.8"/><circle cx="15" cy="13" r="3.5" fill="none" stroke="#777" stroke-width="1.5"/></svg>
<div class="t" style="left:736px;top:1235px;font-size:15.5px;color:#777">缺失字体</div>
<svg style="left:1545px;top:1232px" width="19" height="20"><path d="M9.5 1.5l8 4v9l-8 4-8-4v-9z M1.5 5.5l8 4 8-4M9.5 9.5v9" fill="none" stroke="#777" stroke-width="1.6"/></svg>
<div class="t" style="left:1570px;top:1234px;font-size:15.5px;color:#777">智能美化</div>
<div class="a" style="left:1651px;top:1241px;width:3px;height:3px;background:#777"></div>
<svg style="left:1681px;top:1234px" width="22" height="16"><path d="M1 2h10M1 8h20M1 14h20M14 1l3 4 3-4" fill="none" stroke="#777" stroke-width="1.6"/></svg>
<div class="t" style="left:1705px;top:1234px;font-size:15.5px;color:#777">备注</div>
<div class="a" style="left:1746px;top:1241px;width:3px;height:3px;background:#aaa"></div>
<svg style="left:1762px;top:1232px" width="21" height="20"><path d="M5 1.5h14.5v13H16M1.5 5h14v13.5h-14z M5 10h7M5 14h7" fill="none" stroke="#777" stroke-width="1.6"/></svg>
<div class="t" style="left:1788px;top:1234px;font-size:15.5px;color:#777">批注</div>
<div class="a" style="left:1840px;top:1227px;width:32px;height:30px;background:#cfcfcf;border-radius:3px"></div>
<svg style="left:1844px;top:1231px" width="24" height="22"><rect x="1.5" y="1.5" width="21" height="19" fill="none" stroke="#666" stroke-width="2"/><path d="M7 2v18M7 14h15" stroke="#666" stroke-width="2"/></svg>
<svg style="left:1879px;top:1232px" width="21" height="21"><rect x="1" y="1" width="7" height="7" fill="none" stroke="#777" stroke-width="1.8"/><rect x="12" y="1" width="7" height="7" fill="none" stroke="#777" stroke-width="1.8"/><rect x="1" y="12" width="7" height="7" fill="none" stroke="#777" stroke-width="1.8"/><rect x="12" y="12" width="7" height="7" fill="none" stroke="#777" stroke-width="1.8"/></svg>
<svg style="left:1912px;top:1232px" width="23" height="21"><path d="M1.5 1.5h20v17h-20z M11.5 1.5v17" fill="none" stroke="#777" stroke-width="1.8"/></svg>
<!-- edit area scrollbar & side icons -->
<div class="a" style="left:2308px;top:754px;width:13px;height:40px;border-radius:3px;background:#f2f2f2;border:1px solid #d8d8d8"></div>
<div class="a" style="left:2313px;top:192px;width:4px;height:3px;background:#888"></div>
<svg style="left:2342px;top:224px" width="24" height="22"><circle cx="4" cy="5" r="3" fill="none" stroke="#666" stroke-width="1.5"/><path d="M7 5h16M1 16h15" stroke="#666" stroke-width="1.5"/><circle cx="19" cy="16" r="3" fill="none" stroke="#666" stroke-width="1.5"/></svg>
<svg style="left:2342px;top:271px" width="24" height="24"><path d="M12 1.5l3 7 7.5.5-5.5 5 2 7.5-7-4-7 4 2-7.5-5.5-5 7.5-.5z" fill="none" stroke="#666" stroke-width="1.5"/></svg>
<svg style="left:2342px;top:319px" width="24" height="22"><path d="M4 1.5h18v14M1.5 5h17v15h-17z M5 10h9" fill="none" stroke="#666" stroke-width="1.5"/></svg>
<svg style="left:2342px;top:366px" width="24" height="24"><circle cx="12" cy="12" r="10" fill="none" stroke="#666" stroke-width="1.5"/><path d="M8.5 9a3.5 3.5 0 1 1 5 3c-1 .6-1.5 1.2-1.5 2.5" fill="none" stroke="#666" stroke-width="1.5"/><circle cx="12" cy="18" r="1" fill="#666"/></svg>

<!-- I-beam cursor -->
<svg style="left:1160px;top:620px" width="26" height="40"><path d="M3 2c5 0 8 1 10 3 2-2 5-3 10-3M13 5v30M3 38c5 0 8-1 10-3 2 2 5 3 10 3" fill="none" stroke="#222" stroke-width="3"/></svg>

<!-- video overlay -->
<svg style="left:1960px;top:946px;overflow:hidden" width="560" height="320" viewBox="1960 946 560 320">
<defs>
<linearGradient id="vbg" x1="0" y1="0" x2="1" y2="1"><stop offset="0" stop-color="#0a241c"/><stop offset=".5" stop-color="#061710"/><stop offset="1" stop-color="#071a13"/></linearGradient>
<radialGradient id="face" cx=".5" cy=".4" r=".65"><stop offset="0" stop-color="#dcc6b8"/><stop offset=".65" stop-color="#cdb2a2"/><stop offset="1" stop-color="#a88878"/></radialGradient>
<linearGradient id="shirt" x1="0" y1="0" x2="0" y2="1"><stop offset="0" stop-color="#526475"/><stop offset="1" stop-color="#435466"/></linearGradient>
<linearGradient id="hair" x1="0" y1="0" x2="0" y2="1"><stop offset="0" stop-color="#5e5c58"/><stop offset="1" stop-color="#3e3c38"/></linearGradient>
<filter id="vb" x="-10%" y="-10%" width="120%" height="120%"><feGaussianBlur stdDeviation="1.6"/></filter>
</defs>
<rect x="1960" y="946" width="560" height="320" fill="url(#vbg)"/>
<g filter="url(#vb)">
<path d="M2138,1260 C2140,1215 2148,1178 2168,1156 C2190,1140 2215,1132 2228,1126 L2308,1124 C2325,1132 2355,1140 2380,1154 C2400,1175 2408,1220 2414,1260Z" fill="url(#shirt)"/>
<path d="M2228,1126 L2268,1182 L2275,1180 L2244,1126Z M2308,1124 L2272,1182 L2265,1180 L2294,1124Z" fill="#3a4656"/>
<path d="M2240,1124 C2250,1140 2262,1165 2270,1172 C2278,1165 2290,1140 2298,1122 C2290,1118 2250,1118 2240,1124Z" fill="#a88c7c"/>
<path d="M2258,1168 L2270,1180 L2284,1168 L2270,1176Z" fill="#e4e4e4"/>
<path d="M2262,1200 C2255,1230 2252,1250 2254,1260 M2335,1170 C2345,1210 2352,1240 2354,1260 M2190,1180 C2180,1210 2175,1240 2172,1260" stroke="#3e5060" stroke-width="3" fill="none" opacity=".8"/>
<path d="M2223,1064 C2220,1095 2228,1122 2242,1136 C2252,1146 2262,1149 2270,1149 C2284,1149 2296,1142 2304,1130 C2314,1114 2319,1090 2318,1062 C2318,1040 2225,1035 2223,1064Z" fill="url(#face)"/>
<ellipse cx="2221" cy="1085" rx="6" ry="14" fill="#c4a694"/>
<path d="M2221,1070 C2216,1040 2230,1018 2256,1011 C2284,1004 2312,1014 2320,1040 C2323,1052 2321,1064 2318,1070 C2316,1056 2306,1048 2294,1046 C2270,1042 2246,1044 2234,1050 C2226,1056 2224,1062 2221,1070Z" fill="url(#hair)"/>
<path d="M2232,1086 C2244,1082 2256,1084 2264,1090 M2276,1090 C2286,1084 2298,1082 2310,1086" stroke="#7a6a60" stroke-width="2.5" fill="none"/>
<path d="M2232,1094 L2264,1094 M2276,1094 L2310,1094" stroke="#a08a80" stroke-width="1.5" fill="none"/>
<path d="M2268,1098 L2266,1108" stroke="#b09080" stroke-width="2"/>
<path d="M2257,1120 C2264,1124 2274,1124 2281,1120" stroke="#6a4a40" stroke-width="3.5" fill="none"/>
<ellipse cx="1990" cy="1223" rx="45" ry="14" transform="rotate(-15 1990 1223)" fill="#47763f"/><ellipse cx="2050" cy="1208" rx="40" ry="13" transform="rotate(-25 2050 1208)" fill="#588a4c"/><ellipse cx="2090" cy="1233" rx="45" ry="15" transform="rotate(-40 2090 1233)" fill="#3c6a36"/><ellipse cx="2015" cy="1253" rx="50" ry="16" transform="rotate(-30 2015 1253)" fill="#5c8e50"/><ellipse cx="1975" cy="1258" rx="35" ry="12" transform="rotate(10 1975 1258)" fill="#6a9a5a"/><ellipse cx="2110" cy="1258" rx="35" ry="13" transform="rotate(-55 2110 1258)" fill="#4a7c44"/><ellipse cx="2060" cy="1263" rx="40" ry="14" transform="rotate(-10 2060 1263)" fill="#3a6634"/><ellipse cx="2030" cy="1193" rx="35" ry="10" transform="rotate(-35 2030 1193)" fill="#669858"/>
<path d="M2447,1260 L2449,1192 L2481,1192 L2483,1260Z" fill="#78b444"/>
<path d="M2454,1260 L2456,1192 L2467,1192 L2467,1260Z" fill="#a0d468"/>
<path d="M2447,1230 L2483,1230" stroke="#5e9a34" stroke-width="2"/>
<ellipse cx="2464" cy="1150" rx="38" ry="48" fill="#5a9c30" opacity=".55"/>
<path d="M2461,1178 Q2437,1155 2424,1132" stroke="#4e9a2a" stroke-width="4.3" stroke-linecap="round" fill="none"/><path d="M2459,1190 Q2477,1175 2495,1160" stroke="#a6d868" stroke-width="6.2" stroke-linecap="round" fill="none"/><path d="M2459,1165 Q2443,1129 2439,1093" stroke="#4e9a2a" stroke-width="5.6" stroke-linecap="round" fill="none"/><path d="M2473,1161 Q2484,1146 2501,1130" stroke="#5ea830" stroke-width="7.3" stroke-linecap="round" fill="none"/><path d="M2462,1184 Q2475,1147 2481,1110" stroke="#a6d868" stroke-width="5.6" stroke-linecap="round" fill="none"/><path d="M2472,1163 Q2463,1125 2460,1087" stroke="#74b83c" stroke-width="6.0" stroke-linecap="round" fill="none"/><path d="M2471,1173 Q2487,1141 2502,1110" stroke="#a6d868" stroke-width="6.3" stroke-linecap="round" fill="none"/><path d="M2461,1187 Q2461,1165 2450,1143" stroke="#5ea830" stroke-width="7.4" stroke-linecap="round" fill="none"/><path d="M2471,1189 Q2483,1170 2490,1151" stroke="#4e9a2a" stroke-width="6.3" stroke-linecap="round" fill="none"/><path d="M2465,1169 Q2442,1142 2416,1116" stroke="#5ea830" stroke-width="5.9" stroke-linecap="round" fill="none"/><path d="M2455,1187 Q2457,1162 2453,1136" stroke="#5ea830" stroke-width="5.2" stroke-linecap="round" fill="none"/><path d="M2466,1161 Q2486,1151 2497,1141" stroke="#4e9a2a" stroke-width="5.3" stroke-linecap="round" fill="none"/><path d="M2474,1169 Q2502,1160 2529,1152" stroke="#5ea830" stroke-width="4.4" stroke-linecap="round" fill="none"/><path d="M2460,1168 Q2494,1153 2532,1138" stroke="#5ea830" stroke-width="7.9" stroke-linecap="round" fill="none"/><path d="M2471,1171 Q2468,1152 2456,1133" stroke="#4e9a2a" stroke-width="5.5" stroke-linecap="round" fill="none"/><path d="M2473,1184 Q2485,1167 2492,1149" stroke="#8cc850" stroke-width="5.7" stroke-linecap="round" fill="none"/><path d="M2474,1176 Q2462,1157 2443,1138" stroke="#4e9a2a" stroke-width="5.4" stroke-linecap="round" fill="none"/><path d="M2462,1178 Q2487,1171 2509,1163" stroke="#74b83c" stroke-width="4.2" stroke-linecap="round" fill="none"/><path d="M2461,1181 Q2453,1149 2455,1116" stroke="#a6d868" stroke-width="4.1" stroke-linecap="round" fill="none"/><path d="M2459,1174 Q2473,1139 2494,1104" stroke="#4e9a2a" stroke-width="6.4" stroke-linecap="round" fill="none"/><path d="M2471,1168 Q2449,1144 2420,1121" stroke="#a6d868" stroke-width="4.4" stroke-linecap="round" fill="none"/><path d="M2457,1175 Q2484,1164 2519,1153" stroke="#8cc850" stroke-width="5.0" stroke-linecap="round" fill="none"/><path d="M2456,1170 Q2447,1137 2445,1104" stroke="#8cc850" stroke-width="6.7" stroke-linecap="round" fill="none"/><path d="M2456,1182 Q2483,1155 2512,1128" stroke="#74b83c" stroke-width="7.5" stroke-linecap="round" fill="none"/><path d="M2465,1166 Q2449,1151 2438,1135" stroke="#4e9a2a" stroke-width="4.7" stroke-linecap="round" fill="none"/><path d="M2470,1170 Q2493,1148 2516,1126" stroke="#74b83c" stroke-width="5.7" stroke-linecap="round" fill="none"/>
</g>
</svg>
</div>
<div class="t wm" style="top:608px">易学巴巴网：www.yixue88.cn</div>
<div class="t wm" style="top:635px">更多资料+微信：3458344044</div>
</body></html>
